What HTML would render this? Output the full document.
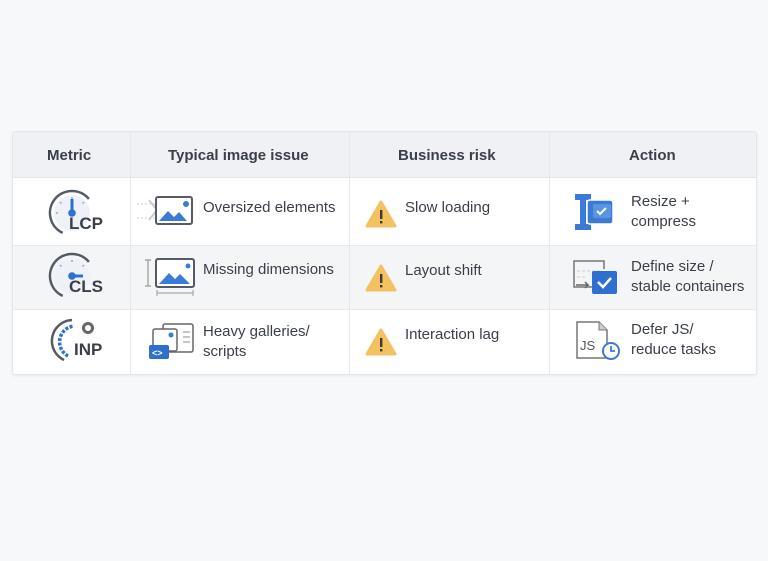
<!DOCTYPE html>
<html><head><meta charset="utf-8"><style>
body{margin:0;width:768px;height:561px;background:#f7f8fa;font-family:"Liberation Sans",sans-serif;color:#2f3540;position:relative;overflow:hidden}
.t{position:absolute;left:12px;top:131px;width:743px;height:242px;border:1px solid #e3e6eb;border-radius:3px;background:#fff;box-shadow:0 1px 3px rgba(0,0,0,.06);overflow:hidden}
.r{position:absolute;left:0;width:743px}
.v{position:absolute;top:0;bottom:0;width:1px;background:#e6e8ec}
.h{position:absolute;font-size:15px;font-weight:bold;color:#3a3f48;top:15px}
.x{position:absolute;font-size:15px;color:#3a3f48;line-height:20px}
.m{position:absolute;font-weight:bold;font-size:17px;color:#3a3f48}
svg{position:absolute}
</style></head><body>
<div class="t">
<div class="r" style="top:0;height:45px;background:#eff1f5;border-bottom:1px solid #e3e6eb"></div>
<div class="r" style="top:113px;height:63px;background:#f4f5f7;border-top:1px solid #e6e8ec;border-bottom:1px solid #e6e8ec"></div>
<div class="v" style="left:117px"></div><div class="v" style="left:336px"></div><div class="v" style="left:536px"></div>
<div class="h" style="left:34px">Metric</div>
<div class="h" style="left:155px">Typical image issue</div>
<div class="h" style="left:385px">Business risk</div>
<div class="h" style="left:616px">Action</div>

<!-- LCP -->
<svg style="left:33px;top:55px" width="56" height="52"><circle cx="26" cy="26" r="18" fill="#eef2f8"/><path d="M16.7 45.9 A22 22 0 1 1 42.9 11.9" fill="none" stroke="#555b66" stroke-width="2.5"/><path d="M26 10v2M14 15l1.5 1.5M38 15l-1.5 1.5M10 26h2" stroke="#9ab" stroke-width="1.5"/><rect x="24.5" y="12" width="3" height="13" fill="#2f6fd0"/><circle cx="26" cy="26" r="3.8" fill="#2f6fd0"/></svg>
<div class="m" style="left:56px;top:82px">LCP</div>
<!-- CLS -->
<svg style="left:33px;top:118px" width="56" height="52"><circle cx="26" cy="26" r="18" fill="#eef2f8"/><path d="M16.7 45.9 A22 22 0 1 1 42.9 11.9" fill="none" stroke="#555b66" stroke-width="2.5"/><path d="M26 10v2M14 15l1.5 1.5M38 15l-1.5 1.5" stroke="#9ab" stroke-width="1.5"/><rect x="26" y="24.5" width="11" height="3" fill="#2f6fd0"/><circle cx="26" cy="26" r="3.8" fill="#2f6fd0"/></svg>
<div class="m" style="left:56px;top:145px">CLS</div>
<!-- INP -->
<svg style="left:33px;top:182px" width="56" height="52"><path d="M18 46 A21 21 0 0 1 26 6" fill="none" stroke="#555b66" stroke-width="2.5"/><path d="M22 42 A16 16 0 0 1 28 12" fill="none" stroke="#2f6fd0" stroke-width="3.5" stroke-dasharray="3 1.5"/><circle cx="42" cy="14" r="4.5" fill="none" stroke="#666" stroke-width="3"/></svg>
<div class="m" style="left:61px;top:208px">INP</div>

<!-- issue icons -->
<svg style="left:122px;top:62px" width="62" height="32"><path d="M2 10h18M2 24h18" stroke="#ccc" stroke-dasharray="2 2"/><path d="M14 6l8 10-8 10" fill="none" stroke="#ccc" stroke-width="2"/><rect x="21" y="3" width="36" height="27" rx="2" fill="#fff" stroke="#555b66" stroke-width="2"/><path d="M24 27l9-10 6 6 5-5 8 9z" fill="#3b7ad6"/><circle cx="51" cy="10" r="3" fill="#3b7ad6"/></svg>
<div class="x" style="left:190px;top:66px">Oversized elements</div>
<svg style="left:130px;top:126px" width="56" height="40"><path d="M5 2v26M2 2h6M2 28h6" stroke="#999" stroke-width="1.2"/><rect x="13" y="1" width="38" height="28" rx="2" fill="#fff" stroke="#555b66" stroke-width="2"/><path d="M16 26l10-11 6 6 5-5 10 10z" fill="#3b7ad6"/><circle cx="45" cy="8" r="2.5" fill="#3b7ad6"/><path d="M14 35h36M14 32v6M50 32v6" stroke="#aaa" stroke-width="1.2"/></svg>
<div class="x" style="left:190px;top:128px">Missing dimensions</div>
<svg style="left:134px;top:191px" width="50" height="38"><rect x="16" y="1" width="30" height="28" rx="2" fill="#fff" stroke="#666" stroke-width="1.5"/><path d="M36 9h7M36 14h7M36 19h7" stroke="#888"/><rect x="6" y="6" width="24" height="22" rx="2" fill="#fff" stroke="#666" stroke-width="1.5"/><circle cx="24" cy="12" r="2.5" fill="#3b7ad6"/><rect x="2" y="22" width="20" height="14" rx="2" fill="#2f6fd0"/><text x="5" y="33" font-size="9" font-weight="bold" fill="#fff" font-family="Liberation Sans">&lt;&gt;</text></svg>
<div class="x" style="left:190px;top:190px">Heavy galleries/<br>scripts</div>

<!-- warnings -->
<svg style="left:352px;top:68px" width="32" height="28"><path d="M16 2L30 26H2z" fill="#f2c260" stroke="#f2c260" stroke-width="3" stroke-linejoin="round"/><rect x="15" y="10" width="2.4" height="9" fill="#3a3a3a"/><rect x="15" y="21" width="2.4" height="2.4" fill="#3a3a3a"/></svg>
<div class="x" style="left:392px;top:66px">Slow loading</div>
<svg style="left:352px;top:132px" width="32" height="28"><path d="M16 2L30 26H2z" fill="#f2c260" stroke="#f2c260" stroke-width="3" stroke-linejoin="round"/><rect x="15" y="10" width="2.4" height="9" fill="#3a3a3a"/><rect x="15" y="21" width="2.4" height="2.4" fill="#3a3a3a"/></svg>
<div class="x" style="left:392px;top:129px">Layout shift</div>
<svg style="left:352px;top:196px" width="32" height="28"><path d="M16 2L30 26H2z" fill="#f2c260" stroke="#f2c260" stroke-width="3" stroke-linejoin="round"/><rect x="15" y="10" width="2.4" height="9" fill="#3a3a3a"/><rect x="15" y="21" width="2.4" height="2.4" fill="#3a3a3a"/></svg>
<div class="x" style="left:392px;top:193px">Interaction lag</div>

<!-- actions -->
<svg style="left:560px;top:60px" width="44" height="40"><path d="M2 2h16v6h-5v24h5v6H2v-6h5V8H2z" fill="#3b7ad6"/><rect x="14" y="8" width="26" height="24" rx="3" fill="#3b7ad6" stroke="#fff" stroke-width="1.5"/><rect x="20" y="12" width="18" height="14" rx="2" fill="#5a93e0"/><path d="M24 19l3 3 6-6" stroke="#fff" stroke-width="2" fill="none"/></svg>
<div class="x" style="left:618px;top:60px">Resize +<br>compress</div>
<svg style="left:559px;top:127px" width="46" height="38"><path d="M22 28H2V2h30v8" fill="none" stroke="#777" stroke-width="1.5"/><path d="M5 12h24M5 18h10" stroke="#ccc" stroke-dasharray="3 2"/><path d="M4 26h12l-3-3M16 26l-3 3" stroke="#666" stroke-width="1.5" fill="none"/><rect x="20" y="12" width="25" height="23" rx="2" fill="#2f6fd0"/><path d="M26 23l5 5 8-9" stroke="#fff" stroke-width="2.5" fill="none"/></svg>
<div class="x" style="left:618px;top:125px">Define size /<br>stable containers</div>
<svg style="left:562px;top:188px" width="50" height="42"><path d="M2 2h22l8 8v28H2z" fill="#fff" stroke="#777" stroke-width="1.5"/><path d="M24 2v8h8" fill="#ccc" stroke="#777"/><text x="5" y="30" font-size="13" fill="#555" font-family="Liberation Sans">JS</text><circle cx="36" cy="31" r="8" fill="#fff" stroke="#3b7ad6" stroke-width="2"/><path d="M36 26v5h4" stroke="#3b7ad6" stroke-width="1.8" fill="none"/></svg>
<div class="x" style="left:618px;top:188px">Defer JS/<br>reduce tasks</div>
</div>
</body></html>
